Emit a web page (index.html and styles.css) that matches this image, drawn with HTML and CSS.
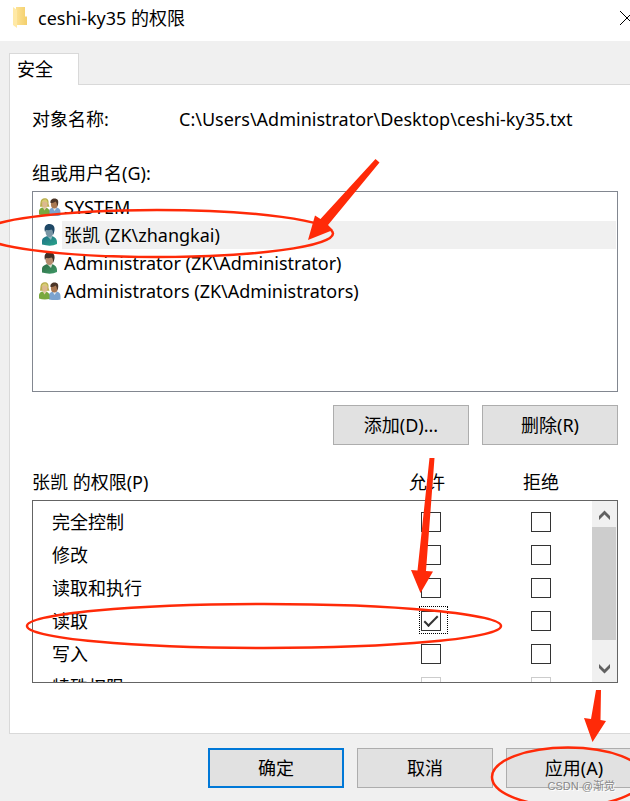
FILE: index.html
```html
<!DOCTYPE html>
<html lang="zh-CN">
<head>
<meta charset="utf-8">
<title>ceshi-ky35 的权限</title>
<link rel="stylesheet" href="styles.css">
</head>
<body>
<svg class="defs" aria-hidden="true">
  <defs>
    <linearGradient id="fold" x1="0" x2="1"><stop offset="0" stop-color="#fde295"/><stop offset="1" stop-color="#f3cf6b"/></linearGradient>
    <linearGradient id="teal" x1="0" x2="1" y2="1"><stop offset="0" stop-color="#1f6f86"/><stop offset="1" stop-color="#2aa58a"/></linearGradient>
    <linearGradient id="green" x1="0" x2="1" y2="1"><stop offset="0" stop-color="#2f6b45"/><stop offset="1" stop-color="#3f9a68"/></linearGradient>
    <symbol id="group" viewBox="0 0 22 18">
      <path d="M10 17.5V13c0-2 2-3 4-3.500h3.500c2.500.5 4 2 4 4.500v3.500Q16 18.500 10 17.500z" fill="#7ba3cf"/>
      <path d="M13.500 9.500l2 3.500 2.500-3.500z" fill="#dfe9f2"/>
      <ellipse cx="15.300" cy="6" rx="3.400" ry="4.500" fill="#a97852"/>
      <path d="M11.500 5C11 2 13 .5 15.500.5c3 0 4.500 2 3.500 6l-1 2c0-3-.5-4-1.500-5-1.500 1.500-3 1.500-5 1.500z" fill="#4b3528"/>
      <path d="M1.500 4C2 1 4 0 6 .3c3 0 4 2.500 3.500 5.500l1 3H1z" fill="#b9ae4e"/>
      <path d="M0 16.500V13c0-2 2-3.300 4-3.500h2.500c2.500.5 4 2 4 4V17q-6 1-10.500-.5z" fill="#79a83e"/>
      <path d="M3.500 9l2 3.500L8 9z" fill="#e6cfac"/>
      <ellipse cx="5.800" cy="5.700" rx="2.700" ry="3.800" fill="#dcb98f"/>
      <path d="M2.500 5C3 2 5 1 7 1.500l2 3C6.500 4.500 5 3.500 5 3z" fill="#d7cc75"/>
    </symbol>
    <symbol id="user-teal" viewBox="0 0 18 22">
      <path d="M1 20.500V17c0-3 3-4 5-5h5c3 1 5 3 5 6v2q-6 3-15 .5z" fill="url(#teal)"/>
      <path d="M6 12l4 4 1.500-4z" fill="#8eb9bf"/>
      <ellipse cx="8.500" cy="7.500" rx="4" ry="5.500" fill="#7895a4"/>
      <path d="M4 8C2.500 2.500 5 0 8.500 0 13 0 14.500 4 13 8.500L12 11c0-3 .2-4-1.500-5.500C8 6.500 6 6 5 6z" fill="#1f4866"/>
    </symbol>
    <symbol id="user-green" viewBox="0 0 18 22">
      <path d="M1 20.500V17c0-3 3-4 5-5h5c3 1 5 3 5 6v2q-6 3-15 .5z" fill="url(#green)"/>
      <path d="M6 12l4 4 1.500-4z" fill="#d2dccb"/>
      <ellipse cx="8.500" cy="7.500" rx="4" ry="5.500" fill="#b58c6e"/>
      <path d="M4 8C2.500 2.500 5 0 8.500 0 13 0 14.500 4 13 8.500L12 11c0-3 .2-4-1.500-5.500C8 6.500 6 6 5 6z" fill="#403027"/>
    </symbol>
  </defs>
</svg>

<main class="dialog">
  <header class="titlebar">
    <svg class="folder" viewBox="0 0 16 22" aria-hidden="true">
      <path d="M4 0h9v9.500h2V18H4z" fill="url(#fold)"/>
      <path d="M1 0l4 3v18l-4-3z" fill="#ffe9a6"/>
    </svg>
    <h1 class="title">ceshi-ky35 的权限</h1>
    <button class="close" type="button" aria-label="关闭">
      <svg viewBox="0 0 16 16" aria-hidden="true"><path d="M1 1l14 14M15 1L1 15" stroke="#000" fill="none"/></svg>
    </button>
  </header>

  <nav class="tabs"><button class="tab" type="button">安全</button></nav>

  <section class="panel">
    <div class="object">
      <span class="object-label">对象名称:</span>
      <span>C:\Users\Administrator\Desktop\ceshi-ky35.txt</span>
    </div>

    <h2 class="label" id="groups">组或用户名(G):</h2>
    <ul class="users" aria-labelledby="groups">
      <li class="user"><svg class="group-icon"><use href="#group"/></svg><span class="name">SYSTEM</span></li>
      <li class="user selected"><svg class="user-icon"><use href="#user-teal"/></svg><span class="name">张凯 (ZK\zhangkai)</span></li>
      <li class="user"><svg class="user-icon"><use href="#user-green"/></svg><span class="name">Administrator (ZK\Administrator)</span></li>
      <li class="user"><svg class="group-icon"><use href="#group"/></svg><span class="name">Administrators (ZK\Administrators)</span></li>
    </ul>

    <div class="actions">
      <button class="button" type="button">添加(D)...</button>
      <button class="button" type="button">删除(R)</button>
    </div>

    <div class="perm-head">
      <h2 class="label">张凯 的权限(P)</h2>
      <span class="col" id="allow">允许</span>
      <span class="col" id="deny">拒绝</span>
    </div>
    <div class="perm-box">
      <div class="perm-view">
        <table class="perms">
          <tr><th scope="row">完全控制</th><td><input type="checkbox" aria-label="允许 完全控制"></td><td><input type="checkbox" aria-label="拒绝 完全控制"></td></tr>
          <tr><th scope="row">修改</th><td><input type="checkbox" aria-label="允许 修改"></td><td><input type="checkbox" aria-label="拒绝 修改"></td></tr>
          <tr><th scope="row">读取和执行</th><td><input type="checkbox" aria-label="允许 读取和执行"></td><td><input type="checkbox" aria-label="拒绝 读取和执行"></td></tr>
          <tr><th scope="row">读取</th><td class="focused"><input type="checkbox" checked aria-label="允许 读取"></td><td><input type="checkbox" aria-label="拒绝 读取"></td></tr>
          <tr><th scope="row">写入</th><td><input type="checkbox" aria-label="允许 写入"></td><td><input type="checkbox" aria-label="拒绝 写入"></td></tr>
          <tr><th scope="row">特殊权限</th><td><input type="checkbox" disabled aria-label="允许 特殊权限"></td><td><input type="checkbox" disabled aria-label="拒绝 特殊权限"></td></tr>
        </table>
      </div>
      <div class="scrollbar" aria-hidden="true">
        <svg class="arrow" viewBox="0 0 24 26"><path d="M7 19v-4l5.500-5.500L18 15v4l-5.500-5.500z" fill="#606060"/></svg>
        <div class="thumb"></div>
        <svg class="arrow" viewBox="0 0 24 26"><path d="M7 8v4l5.500 5.500L18 12V8l-5.500 5.500z" fill="#606060"/></svg>
      </div>
    </div>
  </section>

  <footer class="footer">
    <button class="button primary" type="button">确定</button>
    <button class="button" type="button">取消</button>
    <button class="button" type="button">应用(A)</button>
  </footer>
</main>

<svg class="marks" viewBox="0 0 630 801" aria-hidden="true">
  <g fill="none" stroke="#ff2a08" stroke-width="2.500">
    <ellipse cx="157" cy="233.500" rx="176" ry="23.500"/>
    <ellipse cx="264" cy="626" rx="237" ry="22"/>
    <ellipse cx="568" cy="777" rx="76" ry="29.500"/>
  </g>
  <g fill="#ff2a08">
    <path d="M375.500 159l4 3.500L328 225l5 5-25 10 7-24.500 5.500 3.500z"/>
    <path d="M429.500 458h5L426 571l7 .5-12.500 21.500-9.500-23 6.500.5z"/>
    <path d="M596 690h5l-.5 30 5.500 1-13.500 21-8.500-24 7 1z"/>
  </g>
</svg>
<span class="watermark">CSDN @渐觉</span>
</body>
</html>
```
FILE: styles.css
```css
*, ::before, ::after { box-sizing: border-box; }

body {
  position: relative;
  margin: 0;
  overflow: hidden;
  background: #f0f0f0;
  color: #000;
  font: 18px/28px "Noto Sans", "Noto Sans CJK SC", sans-serif;
}

button { font: inherit; color: inherit; }
h1, h2 { margin: 0; font-size: 18px; font-weight: 400; }
.defs { position: absolute; width: 0; height: 0; }

.dialog { display: flex; flex-direction: column; min-height: 100vh; }

.titlebar {
  display: flex;
  align-items: center;
  height: 41px;
  padding: 0 0 6px 12px;
  background: #fff;
}
.folder { width: 16px; height: 22px; }
.title { flex: 1; margin-left: 10px; }
.close {
  flex: none;
  width: 16px;
  height: 16px;
  margin-right: -5px;
  padding: 0;
  border: 0;
  background: none;
}
.close svg { display: block; }

.tabs { display: flex; padding: 12px 0 0 9px; }
.tab {
  position: relative;
  width: 70px;
  height: 32px;
  margin-bottom: -1px;
  padding: 0 0 2px 7px;
  border: 1px solid #d9d9d9;
  border-bottom: 0;
  background: #fff;
  text-align: left;
}

.panel {
  flex: 1;
  margin-left: 9px;
  padding: 20px 12px 50px 22px;
  border: solid #d9d9d9;
  border-width: 1px 0 1px 1px;
  background: #fff;
}

.object { display: flex; margin-bottom: 26px; }
.object-label { width: 147px; }
.label { font-size: 18px; }

.users {
  height: 201px;
  margin: 4px 0 13px;
  padding: 1px;
  border: 1px solid #828790;
  list-style: none;
}
.user { display: flex; align-items: center; height: 28px; }
.group-icon { width: 22px; height: 18px; margin: 0 2px 0 5px; }
.user-icon { width: 18px; height: 22px; margin: 0 4px 0 7px; }
.name { flex: 1; margin-left: -1px; padding-left: 2px; }
.selected .name { background: #f0f0f0; }

.actions { display: flex; justify-content: flex-end; gap: 13px; margin-bottom: 23px; }
.button {
  flex: none;
  width: 136px;
  height: 40px;
  padding: 0;
  border: 1px solid #adadad;
  background: #e1e1e1;
}
.primary { border: 2px solid #0078d7; }

.perm-head { display: flex; gap: 4px; padding-right: 22px; }
.perm-head .label { flex: 1; }
.col { width: 110px; text-align: center; }

.perm-box {
  display: flex;
  height: 183px;
  margin-top: 4px;
  border: 1px solid #646464;
}
.perm-view { flex: 1; overflow: hidden; }
.perms { width: 100%; margin-top: 4px; border-collapse: collapse; table-layout: fixed; }
.perms tr { height: 33px; }
.perms th { padding: 0 0 0 19px; font-weight: 400; text-align: left; }
.perms td { width: 110px; height: 33px; padding: 0 0 0 50px; }
.perms td:last-child { width: 111px; }
.perms input {
  display: block;
  appearance: none;
  width: 20px;
  height: 20px;
  margin: 0;
  border: 1px solid #333;
  background: #fff;
}
.perms input:disabled { border-color: #ccc; }
.perms input:checked::before {
  display: block;
  width: 14px;
  height: 7px;
  margin: 4px 0 0 2px;
  border: solid #333;
  border-width: 0 0 2px 2px;
  content: "";
  transform: rotate(-45deg);
}
.focused { position: relative; }
.focused::after {
  position: absolute;
  top: 2px;
  left: 48px;
  width: 29px;
  height: 28px;
  border: 1px dotted #000;
  content: "";
}

.scrollbar {
  display: flex;
  flex-direction: column;
  width: 25px;
  padding-right: 1px;
  background: #f0f0f0;
}
.arrow { flex: none; width: 24px; height: 26px; }
.thumb { height: 113px; margin-bottom: auto; background: #cdcdcd; }

.footer {
  display: flex;
  justify-content: flex-end;
  gap: 13px;
  margin-right: -12px;
  padding: 14px 0 13px;
}

.marks { position: absolute; top: 0; left: 0; width: 630px; height: 801px; pointer-events: none; }
.watermark {
  position: absolute;
  right: 15px;
  bottom: 6px;
  color: #888;
  font: 11px/18px "Liberation Sans", "Noto Sans CJK SC", sans-serif;
  text-shadow: 1px 1px 0 #fff;
}
```
